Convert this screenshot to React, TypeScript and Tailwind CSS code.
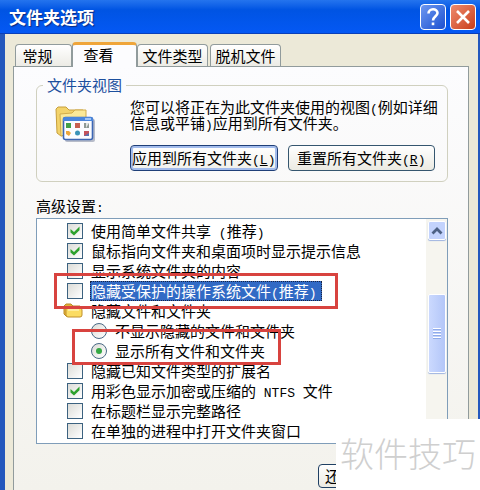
import { useState } from "react";

type Item = {
  id: string;
  label: string;
  kind: "checkbox" | "radio" | "folder";
  checked?: boolean;
  selected?: boolean;
  mark?: string;
};

const tabs = ["常规", "查看", "文件类型", "脱机文件"];

const items: Item[] = [
  { id: "share", label: "使用简单文件共享 (推荐)", kind: "checkbox", checked: true },
  { id: "tips", label: "鼠标指向文件夹和桌面项时显示提示信息", kind: "checkbox", checked: true },
  { id: "sysdir", label: "显示系统文件夹的内容", kind: "checkbox" },
  {
    id: "protected",
    label: "隐藏受保护的操作系统文件(推荐)",
    kind: "checkbox",
    selected: true,
    mark: "left-[17px] w-[284px] -top-2 h-9",
  },
  { id: "hidden", label: "隐藏文件和文件夹", kind: "folder" },
  { id: "hide", label: "不显示隐藏的文件和文件夹", kind: "radio" },
  {
    id: "show",
    label: "显示所有文件和文件夹",
    kind: "radio",
    checked: true,
    mark: "left-[35px] w-[209px] -top-3 h-9",
  },
  { id: "ext", label: "隐藏已知文件类型的扩展名", kind: "checkbox" },
  { id: "color", label: "用彩色显示加密或压缩的 NTFS 文件", kind: "checkbox", checked: true },
  { id: "path", label: "在标题栏显示完整路径", kind: "checkbox" },
  { id: "process", label: "在单独的进程中打开文件夹窗口", kind: "checkbox" },
];

// Latin runs use a narrow monospace face next to the Chinese text
function Label({ text }: { text: string }) {
  return (
    <>
      {text.split(/([\x20-\x7e]+)/).map((part, i) =>
        i % 2 ? (
          <span
            key={i}
            className="font-['Liberation_Mono',monospace] text-[13px] leading-[0] whitespace-pre"
          >
            {part}
          </span>
        ) : (
          part
        )
      )}
    </>
  );
}

function Accel({ letter }: { letter: string }) {
  return (
    <span className="font-['Liberation_Mono',monospace] text-[13px] leading-[0]">
      (<span className="underline">{letter}</span>)
    </span>
  );
}

function FolderViewIcon() {
  return (
    <svg width="40" height="38" viewBox="0 0 40 38" aria-hidden="true">
      <path d="M1 4 L3 2 H11 L14 5 H28 V26 L6 31 L2 28 Z" fill="#f3d36b" stroke="#c79f3c" />
      <path d="M5 9 L17 8 L20 5 L31 5 V25 L6 31 Z" fill="#fbe998" stroke="#d3ad4a" />
      <rect x="10" y="14" width="30" height="23" rx="2" fill="#8b93a8" opacity="0.6" />
      <rect x="8.500" y="12.500" width="29" height="22" rx="2" fill="#fbfcff" stroke="#3c66b4" strokeWidth="1.600" />
      <path d="M8 16 V14 Q8 12 10 12 H36 Q38 12 38 14 V16 Z" fill="#4a86dc" />
      <path d="M30 14 H36" stroke="#bcd8ff" strokeWidth="1.500" />
      <rect x="11" y="18" width="5" height="5" fill="#43a047" />
      <rect x="20" y="18" width="5" height="5" fill="#c8604f" />
      <rect x="29" y="18" width="5" height="5" fill="#8f9a96" />
      <path d="M31 18 L34 18 L31 23 Z" fill="#dfe4e2" />
      <path d="M11 26 H14 L16 28 L14 31 L11 29 Z" fill="#eda63c" />
      <circle cx="22.500" cy="28" r="2.500" fill="#3a93b8" />
      <rect x="29" y="26" width="5" height="5" fill="#c4525c" />
      <path d="M29 31 L34 28 V31 Z" fill="#5b6fb0" />
    </svg>
  );
}

function FolderIcon() {
  return (
    <svg width="20" height="16" viewBox="0 0 20 16" className="shrink-0" aria-hidden="true">
      <path d="M1 3 L3 1 H8 L10 3 H17 V13 H3 L1 11 Z" fill="#e3b23a" stroke="#b98a26" />
      <path d="M4 5 H17 Q19 5 19 7 V12 Q19 14 17 14 H5 Q3 14 3 12 V6 Z" fill="#fbdc62" stroke="#c0902a" />
      <path d="M5 7 H16" stroke="#fff3b0" strokeWidth="1.500" />
    </svg>
  );
}

function Row({ item }: { item: Item }) {
  const [checked, setChecked] = useState(!!item.checked);
  const indent = item.kind === "radio" ? "pl-[54px]" : "pl-[30px]";

  return (
    <li className={`relative h-5 flex items-center ${indent}`}>
      {item.kind === "folder" && (
        <span className="-ml-1 mr-2 flex">
          <FolderIcon />
        </span>
      )}
      {item.kind === "checkbox" && (
        <span className="relative flex shrink-0 mr-2">
          <input
            id={item.id}
            type="checkbox"
            checked={checked}
            onChange={(e) => setChecked(e.target.checked)}
            className="appearance-none size-4 border border-[#3c6280] bg-linear-to-br from-[#dcdcd7] to-white"
          />
          {checked && (
            <svg viewBox="0 0 16 16" className="absolute inset-0 size-4 pointer-events-none">
              <path d="M3.500 6 L7 9 L12.500 3.500 V7.200 L7 12.500 L3.500 9.500 Z" fill="#2da12d" />
            </svg>
          )}
        </span>
      )}
      {item.kind === "radio" && (
        <span className="relative flex shrink-0 mr-2">
          <input
            id={item.id}
            type="radio"
            name="hidden-files"
            defaultChecked={item.checked}
            className="peer appearance-none size-4 rounded-full border border-[#4a6a86] bg-linear-to-br from-[#dcdcd7] to-white"
          />
          <span className="hidden peer-checked:block absolute inset-0 m-auto size-1.5 rounded-full bg-[#35a845] pointer-events-none" />
        </span>
      )}
      {item.kind === "folder" ? (
        <span>
          <Label text={item.label} />
        </span>
      ) : (
        <label
          htmlFor={item.id}
          className={
            item.selected
              ? "h-5 leading-[18px] -ml-px pr-1 bg-[#316ac5] text-white border border-dotted border-[#1b2440]"
              : ""
          }
        >
          <Label text={item.label} />
        </label>
      )}
      {item.mark && (
        <span
          className={`absolute z-10 border-3 border-[#d8433f] pointer-events-none ${item.mark}`}
        />
      )}
    </li>
  );
}

export default function App() {
  const [active, setActive] = useState(1);

  return (
    <div className="relative h-screen overflow-hidden flex flex-col bg-[#ece9d8] text-black text-[15px] leading-5 whitespace-nowrap font-['Noto_Sans_CJK_SC',sans-serif]">
      <header className="h-[34px] shrink-0 flex items-center pl-[9px] pr-1 gap-1 bg-linear-to-b from-[#2474ee] via-[#0054e3] via-30% to-[#0458f4] border-b border-[#0a3fb8]">
        <h1 className="flex-1 text-white font-bold text-[17px] [text-shadow:1px_1px_1px_#0a2a80]">
          文件夹选项
        </h1>
        <button
          aria-label="帮助"
          className="size-[26px] flex items-center justify-center rounded border border-white bg-linear-to-br from-[#6d97f0] to-[#1c4fd0]"
        >
          <svg width="18" height="20" viewBox="0 0 18 20" fill="none" stroke="#fff" strokeWidth="2.600">
            <path d="M4.500 6.500 C4.500 1 13.500 1 13.500 6 C13.500 9 9 9.500 9 13.500" />
            <path d="M9 15.500 V18.200" />
          </svg>
        </button>
        <button
          aria-label="关闭"
          className="size-[26px] flex items-center justify-center rounded border border-white bg-linear-to-br from-[#ee8a6c] to-[#c93c14]"
        >
          <svg width="16" height="16" viewBox="0 0 16 16" stroke="#fff" strokeWidth="2.600">
            <path d="M2 2 L14 14 M14 2 L2 14" />
          </svg>
        </button>
      </header>

      <main className="flex-1 flex flex-col border-l-5 border-r-2 border-[#2458bd] pl-2 pr-[9px] pt-2">
        <div role="tablist" className="flex items-end h-6 pl-0.5 pr-2">
          {tabs.map((tab, i) => (
            <button
              key={tab}
              role="tab"
              aria-selected={i === active}
              onClick={() => setActive(i)}
              className={
                i === active
                  ? "relative z-10 h-[25px] -mb-px w-[65px] pr-3 pb-1 rounded-t border-x border-t-3 border-x-[#919b9c] border-t-[#efa53a] bg-[#fcfcfe] leading-5"
                  : `h-[22px] rounded-t border border-b-0 border-[#919b9c] bg-linear-to-b from-white to-[#ecebe5] ${
                      i === 0 ? "w-[57px] pr-3" : "w-[71px] mr-0.5"
                    }`
              }
            >
              {tab}
            </button>
          ))}
        </div>

        <section className="flex-1 flex flex-col border border-b-0 border-[#919b9c] bg-linear-to-b from-[#fcfcfe] to-[#f3f2ec] pl-[22px] pr-5 pt-2">
          <fieldset className="min-w-0 border border-[#d0d0bf] rounded-md pl-[18px] pr-3 pb-2.5">
            <legend className="-ml-3 px-1 h-5 text-[#1c4f9e]">文件夹视图</legend>
            <div className="flex gap-[35px]">
              <div className="pt-2.5">
                <FolderViewIcon />
              </div>
              <div className="flex-1 min-w-0 pt-1">
                <p className="leading-4">
                  您可以将正在为此文件夹使用的视图
                  <Label text="(" />
                  例如详细
                  <br />
                  信息或平铺
                  <Label text=")" />
                  应用到所有文件夹。
                </p>
                <div className="flex gap-2.5 pt-3.5">
                  <button className="flex-1 h-[26px] rounded border border-[#1f3f78] bg-linear-to-b from-white to-[#f0f0ea] shadow-[inset_0_0_0_2px_#a3bcec]">
                    应用到所有文件夹
                    <Accel letter="L" />
                  </button>
                  <button className="flex-1 h-[26px] rounded border border-[#35566f] bg-linear-to-b from-white to-[#ebeae2]">
                    重置所有文件夹
                    <Accel letter="R" />
                  </button>
                </div>
              </div>
            </div>
          </fieldset>

          <h2 className="pt-3.5 pb-0.5">
            高级设置<Label text=":" />
          </h2>
          <div className="flex border border-[#7f9db9] bg-white">
            <ul className="flex-1 py-0.5">
              {items.map((item) => (
                <Row key={item.id} item={item} />
              ))}
            </ul>
            <div className="w-[21px] flex flex-col items-center bg-[#f6f5ef] pt-0.5">
              <button
                aria-label="向上滚动"
                className="w-[18px] h-[19px] flex items-center justify-center rounded-xs border border-white bg-[#c3d3fd] shadow-[0_1px_1px_#9fb4e0]"
              >
                <svg width="12" height="8" viewBox="0 0 12 8" fill="none" stroke="#4d6185" strokeWidth="2.800">
                  <path d="M1.500 6.500 L6 2 L10.500 6.500" />
                </svg>
              </button>
              <div className="mt-[54px] w-[18px] h-[79px] flex flex-col items-center justify-center gap-px rounded-xs border border-white bg-linear-to-r from-[#cbd9fe] to-[#b3c6f8] shadow-[0_1px_1px_#9fb4e0]">
                {[0, 1, 2, 3].map((n) => (
                  <span key={n} className="w-2 h-0.5 border-t border-white bg-[#8fabea]" />
                ))}
              </div>
            </div>
          </div>

          <div className="flex justify-end pt-5">
            <button className="w-[130px] h-6 pl-1.5 text-left rounded border border-[#1f3f63] bg-linear-to-b from-white to-[#ebeae2]">
              还
            </button>
          </div>
        </section>
      </main>

      <div className="absolute z-20 right-0 bottom-0 w-36 h-[71px] pb-1 flex items-center justify-center bg-white text-[#cfcfcf] text-[34px] font-light">
        软件技巧
      </div>
    </div>
  );
}
